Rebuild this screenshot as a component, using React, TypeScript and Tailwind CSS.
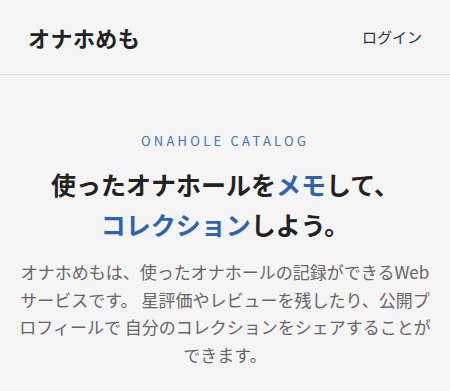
import React from 'react';

const font = { fontFamily: '"Noto Sans CJK JP", "Noto Sans", sans-serif' };

export default function App() {
  return (
    <div className="min-h-screen bg-[#f5f5f5] text-[#222]" style={font}>
      <header className="h-[75px] px-7 flex items-center justify-between border-b border-[#e2e2e2]">
        <h1 className="text-[22px] font-bold tracking-[0.02em] text-[#222]">オナホめも</h1>
        <button className="text-[15px] text-[#333]">ログイン</button>
      </header>

      <main className="px-4 pt-[56px] text-center">
        <p className="text-[13px] leading-5 tracking-[0.25em] text-[#4a72b0]">ONAHOLE CATALOG</p>
        <h2 className="mt-[13px] text-[25px] leading-[40px] font-bold text-[#222]">
          使ったオナホールを<span className="text-[#2f64ad]">メモ</span>して、
          <br />
          <span className="text-[#2f64ad]">コレクション</span>しよう。
        </h2>
        <p className="mt-[14px] text-[17px] leading-[27.5px] text-[#666]">
          オナホめもは、使ったオナホールの記録ができるWebサービスです。 星評価やレビューを残したり、公開プロフィールで 自分のコレクションをシェアすることができます。
        </p>
      </main>
    </div>
  );
}
